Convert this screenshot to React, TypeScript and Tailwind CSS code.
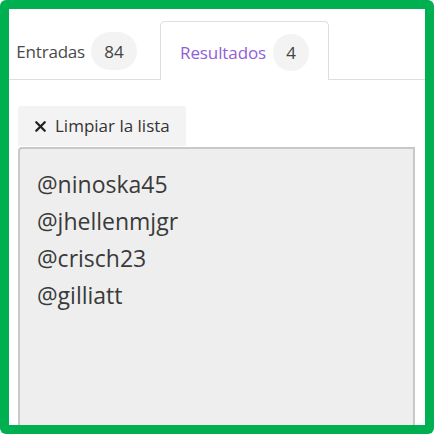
import { X } from "lucide-react";

const FONT = { fontFamily: '"Open Sans", "Noto Sans", sans-serif' };

const RESULTS = ["@ninoska45", "@jhellenmjgr", "@crisch23", "@gilliatt"];

export default function App() {
  return (
    <div className="h-[434px] w-[434px] rounded-[6px] bg-[#00b050] p-[9px]" style={FONT}>
      <div className="h-full w-full overflow-hidden bg-white">
        <div className="flex h-[71px] items-end gap-[3px] border-b border-[#dddddd]">
          {/* first tab is scrolled partly out of view on the left */}
          <div className="flex h-[58px] w-[148px] shrink-0 items-center justify-end gap-[6px] pr-[20px] pt-[2px]">
            <span className="whitespace-nowrap pt-[2px] text-[17px] tracking-[-0.2px] text-[#4a4a4a]">Entradas</span>
            <span className="flex h-[38px] w-[46px] shrink-0 items-center justify-center rounded-full bg-[#f3f3f3] pt-[2px] text-[17px] text-[#444]">
              84
            </span>
          </div>
          <div className="-mb-px flex h-[59px] items-center gap-[7px] rounded-t-[5px] border border-b-0 border-[#dddddd] bg-white pl-[19px] pr-[19px] pt-[2px]">
            <span className="pt-[2px] text-[17px] tracking-[-0.1px] text-[#9060d8]">Resultados</span>
            <span className="flex h-[37px] w-[36px] items-center justify-center rounded-full bg-[#f3f3f3] pt-[2px] text-[17px] text-[#444]">
              4
            </span>
          </div>
        </div>

        <div className="pl-[9px] pr-[10px] pt-[26px]">
          <button className="flex h-[40px] items-center gap-[6px] rounded-t-[3px] bg-[#f3f3f3] pl-[14px] pr-[16px] text-[17px] text-[#333]">
            <X size={17} strokeWidth={3.2} className="text-[#222]" />
            Limpiar la lista
          </button>
          <div className="mt-[1px] h-[300px] rounded-tl-[4px] border-2 border-b-0 border-[#c8c8c8] bg-[#eeeeee] pl-[17px] pt-[17px] text-[23px] leading-[37px] text-[#3a3a3a]">
            {RESULTS.map((r) => (
              <div key={r}>{r}</div>
            ))}
          </div>
        </div>
      </div>
    </div>
  );
}
